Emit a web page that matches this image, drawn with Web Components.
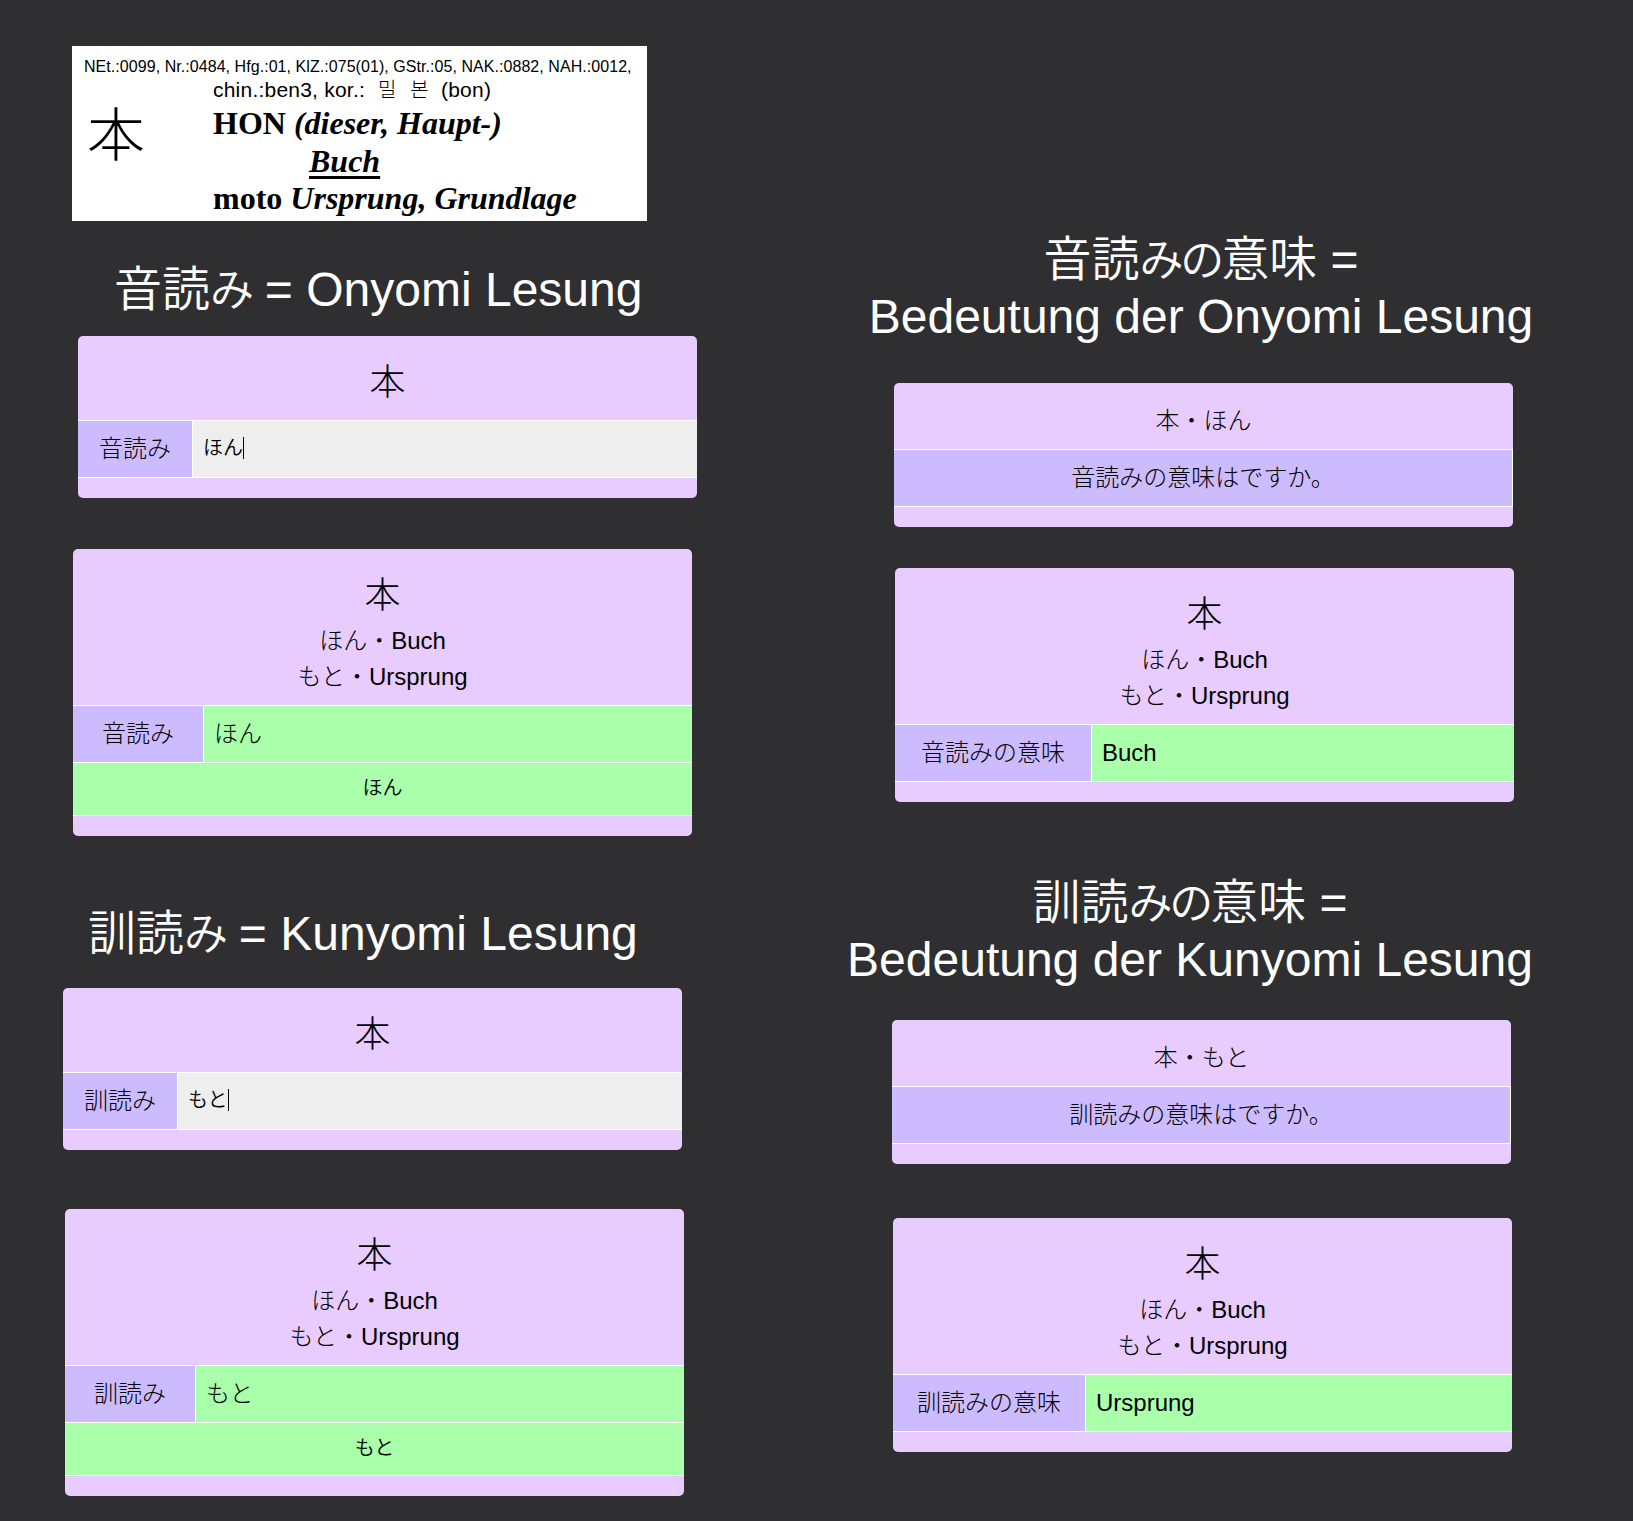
<!DOCTYPE html>
<html lang="ja">
<head>
<meta charset="utf-8">
<title>本</title>
<style>
html,body{margin:0;height:1521px;overflow:hidden;background:#2f2f31}
body{font-family:"Liberation Sans","Noto Sans CJK JP",sans-serif;font-weight:300;color:#000}
</style>
</head>
<body>
<study-board>
  <board-column slot="left">
    <kanji-note style="margin:46px 0 0 72px"></kanji-note>
    <section-title style="margin:40px 0 0 114px;--kana:-2.5px"><div>音読<title-kana>み</title-kana> = Onyomi Lesung</div></section-title>
    <flash-card style="margin:19px 0 0 78px;--label:114px">
      <big-kanji slot="head">本</big-kanji>
      <card-row kind="input"><span slot="label">音読み</span>ほん</card-row>
    </flash-card>
    <flash-card style="margin:51px 0 0 73px;--label:130px">
      <big-kanji slot="head">本</big-kanji><div slot="head">ほん・Buch</div><div slot="head">もと・Ursprung</div>
      <card-row kind="answer"><span slot="label">音読み</span>ほん</card-row>
      <card-row kind="result">ほん</card-row>
    </flash-card>
    <section-title style="margin:69px 0 0 88px;--kana:-2.5px"><div>訓読<title-kana>み</title-kana> = Kunyomi Lesung</div></section-title>
    <flash-card style="margin:27px 0 0 63px;--label:114px">
      <big-kanji slot="head">本</big-kanji>
      <card-row kind="input"><span slot="label">訓読み</span>もと</card-row>
    </flash-card>
    <flash-card style="margin:59px 0 0 65px;--label:130px">
      <big-kanji slot="head">本</big-kanji><div slot="head">ほん・Buch</div><div slot="head">もと・Ursprung</div>
      <card-row kind="answer"><span slot="label">訓読み</span>もと</card-row>
      <card-row kind="result">もと</card-row>
    </flash-card>
  </board-column>
  <board-column slot="right">
    <section-title class="c" style="margin:231px 0 0 51px;width:668px"><div>音読<title-kana>みの</title-kana>意味 =</div><div>Bedeutung der Onyomi Lesung</div></section-title>
    <flash-card style="margin:38px 0 0 78px">
      <div slot="head">本・ほん</div>
      <card-row kind="question">音読みの意味はですか。</card-row>
    </flash-card>
    <flash-card style="margin:41px 0 0 79px;--label:196px">
      <big-kanji slot="head">本</big-kanji><div slot="head">ほん・Buch</div><div slot="head">もと・Ursprung</div>
      <card-row kind="answer"><span slot="label">音読みの意味</span>Buch</card-row>
    </flash-card>
    <section-title class="c" style="margin:72px 0 0 24px;width:700px"><div>訓読<title-kana>みの</title-kana>意味 =</div><div>Bedeutung der Kunyomi Lesung</div></section-title>
    <flash-card style="margin:32px 0 0 76px">
      <div slot="head">本・もと</div>
      <card-row kind="question">訓読みの意味はですか。</card-row>
    </flash-card>
    <flash-card style="margin:54px 0 0 77px;--label:192px">
      <big-kanji slot="head">本</big-kanji><div slot="head">ほん・Buch</div><div slot="head">もと・Ursprung</div>
      <card-row kind="answer"><span slot="label">訓読みの意味</span>Ursprung</card-row>
    </flash-card>
  </board-column>
</study-board>

<script>
const define = (name, html) => customElements.define(name, class extends HTMLElement {
  constructor() {
    super();
    const t = document.createElement('template');
    t.innerHTML = html.trim();
    this.attachShadow({mode: 'open'}).append(t.content.cloneNode(true));
  }
});

define('study-board', `
<style>:host{display:grid;grid-template-columns:816px 817px;height:1521px}</style>
<slot name="left"></slot><slot name="right"></slot>`);

define('board-column', `
<style>:host{display:flex;flex-direction:column;align-items:flex-start}</style><slot></slot>`);

define('section-title', `
<style>:host{display:block;color:#fff;font-size:48px;font-weight:350;line-height:57px;white-space:nowrap;margin-bottom:-1px!important}
:host(.c){text-align:center;margin-bottom:0!important}</style><slot></slot>`);

define('title-kana', `
<style>:host{font-size:44px;line-height:0;letter-spacing:var(--kana,-3.2px)}</style><slot></slot>`);

define('big-kanji', `
<style>:host{display:block;font-size:36px;line-height:54px}</style><slot></slot>`);

define('flash-card', `
<style>
:host{display:block;width:619px;border-radius:5px;overflow:hidden;background:#e8ccff;font-size:24px;line-height:36px}
.head{padding:20px 0 10px;text-align:center}
.foot{height:20px;border-top:1px solid #fff}
</style>
<div class="head"><slot name="head"></slot></div><slot></slot><div class="foot"></div>`);

define('card-row', `
<style>
:host{display:flex;height:56px;border-top:1px solid #fff;line-height:56px;white-space:nowrap}
.label{box-sizing:border-box;width:var(--label);background:#ccbbff;text-align:center;flex:none}
.value{flex:1;border-left:1px solid #fff;padding-left:10px;display:flex;align-items:center}
.caret{display:none;width:1px;height:22px;background:#000}
:host([kind=answer]) .value{background:#aaffaa}
:host([kind=input]) .value{background:#eee;font-size:20px;font-weight:350;line-height:50px;padding-bottom:2px}
:host([kind=input]) .caret{display:block}
:host([kind=result]) .label,:host([kind=question]) .label{display:none}
:host([kind=result]) .value,:host([kind=question]) .value{padding:0;border-left:0;justify-content:center}
:host([kind=result]){height:52px;line-height:48px;font-size:20px;font-weight:350}
:host([kind=result]) .value{background:#aaffaa;padding-bottom:2px}
:host([kind=question]) .value{background:#ccbbff;border-right:1px solid #fff}
</style>
<div class="label"><slot name="label"></slot></div>
<div class="value"><span><slot></slot></span><i class="caret"></i></div>`);

define('kanji-note', `
<style>
:host{display:block;box-sizing:border-box;width:575px;height:175px;background:#fff;white-space:nowrap;overflow:hidden}
.nums{font-size:16px;line-height:20px;padding:11px 0 0 12px;letter-spacing:.056px}
.body{display:grid;grid-template-columns:141px 1fr}
.sign{font-size:58px;line-height:70px;padding:24px 0 0 15px}
.alt{font-size:21px;line-height:24px;letter-spacing:.22px;padding-top:1px;margin-bottom:3px}
.ko{font-family:"Noto Sans CJK KR",sans-serif;font-size:20px;line-height:0;word-spacing:9px;margin:0 6px 0 7px}
.entry{font:bold 32px/37.5px "Liberation Serif",serif}
.sub{padding-left:96px}
u{text-decoration-thickness:3px;text-underline-offset:4px;text-decoration-skip-ink:none}
</style>
<div class="nums">NEt.:0099, Nr.:0484, Hfg.:01, KlZ.:075(01), GStr.:05, NAK.:0882, NAH.:0012,</div>
<div class="body"><div class="sign">本</div><div>
<div class="alt">chin.:ben3, kor.: <span class="ko">밀 본</span> (bon)</div>
<div class="entry">HON <i>(dieser, Haupt-)</i></div>
<div class="entry sub"><i><u>Buch</u></i></div>
<div class="entry">moto <i>Ursprung, Grundlage</i></div>
</div></div>`);
</script>
</body>
</html>
